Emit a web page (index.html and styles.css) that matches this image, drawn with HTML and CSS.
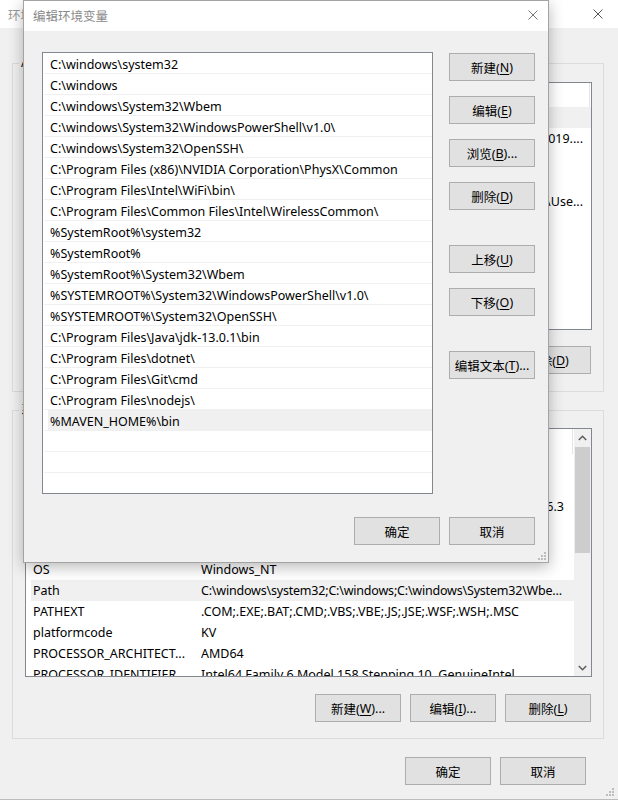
FILE: index.html
```html
<!DOCTYPE html>
<html lang="zh-CN">
<head>
<meta charset="utf-8">
<title>编辑环境变量</title>
<link rel="stylesheet" href="styles.css">
</head>
<body>
<div class="win">
  <div class="win-title">
    <span class="caption">环境变量</span>
    <svg class="x" width="10" height="10" viewBox="0 0 10 10"><path d="M0.5 0.5L9.5 9.5M9.5 0.5L0.5 9.5"/></svg>
  </div>
  <div class="win-body">
    <section class="group">
      <div class="legend">Administrator 的用户变量(<u>U</u>)</div>
      <div class="lv lv-user">
        <div class="lv-main">
          <div class="lv-head"><div class="hc c1">变量</div><div class="hc c2">值</div></div>
          <div class="lv-rows">
            <div class="row sel"><span class="k">ChocolateyLastPathUpdate</span><span class="v">132246912831094521</span></div>
            <div class="row"><span class="k">IntelliJ IDEA</span><span class="v end">D:\Program Files\JetBrains\IntelliJ IDEA 2019....</span></div>
            <div class="row"><span class="k">OneDrive</span><span class="v">C:\Users\Administrator\OneDrive</span></div>
            <div class="row"><span class="k">OneDriveConsumer</span><span class="v">C:\Users\Administrator\OneDrive</span></div>
            <div class="row"><span class="k">Path</span><span class="v end">C:\Program Files\nodejs;C:\Use...</span></div>
            <div class="row"><span class="k">TEMP</span><span class="v">%USERPROFILE%\AppData\Local\Temp</span></div>
            <div class="row"><span class="k">TMP</span><span class="v">%USERPROFILE%\AppData\Local\Temp</span></div>
          </div>
        </div>
      </div>
      <div class="btn-row">
        <button class="btn">新建(<u>N</u>)...</button>
        <button class="btn">编辑(<u>E</u>)...</button>
        <button class="btn">删除(<u>D</u>)</button>
      </div>
    </section>

    <section class="group group-sys">
      <div class="legend">系统变量(<u>S</u>)</div>
      <div class="lv lv-sys">
        <div class="lv-main">
          <div class="lv-head"><div class="hc c1">变量</div><div class="hc c2">值</div></div>
          <div class="lv-rows">
            <div class="row"><span class="k">ComSpec</span><span class="v">C:\windows\system32\cmd.exe</span></div>
            <div class="row"><span class="k">JAVA_HOME</span><span class="v">C:\Program Files\Java\jdk-13.0.1</span></div>
            <div class="row"><span class="k">MAVEN_HOME</span><span class="v end">D:\Program Files\apache-maven-3.6.3</span></div>
            <div class="row"><span class="k">NUMBER_OF_PROCESSORS</span><span class="v">12</span></div>
            <div class="row"><span class="k">NVM_HOME</span><span class="v">C:\Users\Administrator\AppData\Roaming\nvm</span></div>
            <div class="row"><span class="k">OS</span><span class="v">Windows_NT</span></div>
            <div class="row sel"><span class="k">Path</span><span class="v fit">C:\windows\system32;C:\windows;C:\windows\System32\Wbe...</span></div>
            <div class="row"><span class="k">PATHEXT</span><span class="v">.COM;.EXE;.BAT;.CMD;.VBS;.VBE;.JS;.JSE;.WSF;.WSH;.MSC</span></div>
            <div class="row"><span class="k">platformcode</span><span class="v">KV</span></div>
            <div class="row"><span class="k">PROCESSOR_ARCHITECT...</span><span class="v">AMD64</span></div>
            <div class="row"><span class="k">PROCESSOR_IDENTIFIER</span><span class="v">Intel64 Family 6 Model 158 Stepping 10, GenuineIntel</span></div>
            <div class="row"><span class="k">PROCESSOR_LEVEL</span><span class="v">6</span></div>
          </div>
        </div>
        <div class="sb">
          <div class="sb-btn"><svg width="9" height="6" viewBox="0 0 9 6"><path d="M0.8 5L4.5 1.3L8.2 5"/></svg></div>
          <div class="sb-thumb"></div>
          <div class="sb-track"></div>
          <div class="sb-btn"><svg width="9" height="6" viewBox="0 0 9 6"><path d="M0.8 1L4.5 4.7L8.2 1"/></svg></div>
        </div>
      </div>
      <div class="btn-row">
        <button class="btn">新建(<u>W</u>)...</button>
        <button class="btn">编辑(<u>I</u>)...</button>
        <button class="btn">删除(<u>L</u>)</button>
      </div>
    </section>

    <div class="win-foot">
      <button class="btn">确定</button>
      <button class="btn">取消</button>
    </div>
  </div>
  <svg class="grip win-grip" width="8" height="8" viewBox="0 0 8 8"><path d="M6 0h2v2h-2zM6 3h2v2h-2zM3 3h2v2h-2zM6 6h2v2h-2zM3 6h2v2h-2zM0 6h2v2h-2z"/></svg>
</div>

<div class="dlg">
  <div class="dlg-title">
    <span class="caption">编辑环境变量</span>
    <svg class="x" width="10" height="10" viewBox="0 0 10 10"><path d="M0.5 0.5L9.5 9.5M9.5 0.5L0.5 9.5"/></svg>
  </div>
  <div class="dlg-body">
    <ul class="path-list">
      <li>C:\windows\system32</li>
      <li>C:\windows</li>
      <li>C:\windows\System32\Wbem</li>
      <li>C:\windows\System32\WindowsPowerShell\v1.0\</li>
      <li>C:\windows\System32\OpenSSH\</li>
      <li>C:\Program Files (x86)\NVIDIA Corporation\PhysX\Common</li>
      <li>C:\Program Files\Intel\WiFi\bin\</li>
      <li>C:\Program Files\Common Files\Intel\WirelessCommon\</li>
      <li>%SystemRoot%\system32</li>
      <li>%SystemRoot%</li>
      <li>%SystemRoot%\System32\Wbem</li>
      <li>%SYSTEMROOT%\System32\WindowsPowerShell\v1.0\</li>
      <li>%SYSTEMROOT%\System32\OpenSSH\</li>
      <li>C:\Program Files\Java\jdk-13.0.1\bin</li>
      <li>C:\Program Files\dotnet\</li>
      <li>C:\Program Files\Git\cmd</li>
      <li>C:\Program Files\nodejs\</li>
      <li class="sel">%MAVEN_HOME%\bin</li>
      <li></li>
      <li></li>
      <li></li>
    </ul>
    <div class="side">
      <div class="side-group">
        <button class="btn">新建(<u>N</u>)</button>
        <button class="btn">编辑(<u>E</u>)</button>
        <button class="btn">浏览(<u>B</u>)...</button>
        <button class="btn">删除(<u>D</u>)</button>
      </div>
      <div class="side-group">
        <button class="btn">上移(<u>U</u>)</button>
        <button class="btn">下移(<u>O</u>)</button>
      </div>
      <div class="side-group">
        <button class="btn">编辑文本(<u>T</u>)...</button>
      </div>
    </div>
    <div class="dlg-foot">
      <button class="btn">确定</button>
      <button class="btn">取消</button>
    </div>
  </div>
  <svg class="grip dlg-grip" width="8" height="8" viewBox="0 0 8 8"><path d="M6 0h2v2h-2zM6 3h2v2h-2zM3 3h2v2h-2zM6 6h2v2h-2zM3 6h2v2h-2zM0 6h2v2h-2z"/></svg>
</div>
</body>
</html>
```

FILE: styles.css
```css
* { box-sizing: border-box; }

html, body { margin: 0; padding: 0; }

body {
  width: 618px;
  height: 804px;
  overflow: hidden;
  position: relative;
  background: #ffffff;
  color: #000;
  font: 12.5px "Noto Sans", "Noto Sans CJK SC", sans-serif;
}

u { text-decoration: underline; text-underline-offset: 2px; }

.x path { stroke: #555; stroke-width: 1; fill: none; }

/* background window */
.win {
  width: 618px;
  height: 800px;
  background: #f0f0f0;
  border-bottom: 1px solid #bdbdbd;
  position: relative;
}

.win-title {
  height: 28px;
  background: #fff;
  display: flex;
  align-items: center;
  justify-content: space-between;
  padding: 0 15px 0 8px;
  color: #999;
}

.win-body {
  padding: 35px 14px 0 12px;
}

.group {
  position: relative;
  border: 1px solid #dcdcdc;
  padding: 18px 11px 17px 12px;
}

.group-sys {
  margin-top: 18px;
  padding: 17px 11px 16px 12px;
}

.legend {
  position: absolute;
  top: -9px;
  left: 6px;
  padding: 0 2px;
  background: #f0f0f0;
  line-height: 16px;
  white-space: nowrap;
}

.lv {
  background: #fff;
  border: 1px solid #828790;
  display: flex;
  overflow: hidden;
}

.lv-user { height: 248px; }
.lv-sys { height: 249px; }

.lv-main {
  flex: 1;
  min-width: 0;
  display: flex;
  flex-direction: column;
  overflow: hidden;
}

.lv-head {
  flex: none;
  height: 24px;
  display: flex;
  padding-right: 1px;
  color: #000;
}

.lv-sys .lv-head { height: 25px; }

.hc {
  border-right: 1px solid #e5e5e5;
  padding-left: 7px;
  line-height: 24px;
}

.hc.c1 { width: 168px; }
.hc.c2 { flex: 1; }

.lv-rows { flex: 1; overflow: hidden; }

.row {
  height: 21px;
  line-height: 22px;
  display: flex;
  white-space: nowrap;
}

.row.sel { background: linear-gradient(to right, transparent 5px, #f0f0f0 5px); }

.row .k {
  flex: none;
  width: 175px;
  padding-left: 7px;
  overflow: hidden;
}

.row .v {
  flex: 1;
  min-width: 0;
  overflow: hidden;
}

.row .v.fit { letter-spacing: -0.2px; }

.lv-user .v.end { text-align: right; padding-right: 8px; }
.lv-sys .v.end { text-align: right; padding-right: 10px; }

.sb {
  flex: none;
  width: 17px;
  background: #f0f0f0;
  display: flex;
  flex-direction: column;
}

.sb-btn {
  height: 17px;
  flex: none;
  display: flex;
  align-items: center;
  justify-content: center;
}

.sb-btn path { stroke: #606060; stroke-width: 1.6; fill: none; }

.sb-thumb {
  height: 106px;
  margin: 1px 1px 0;
  background: #cdcdcd;
}

.sb-track { flex: 1; }

.btn-row {
  display: flex;
  justify-content: flex-end;
  gap: 9px;
  margin: 16px 1px 0 0;
}

.group-sys .btn-row { margin-top: 17px; }

.btn {
  width: 86px;
  height: 28px;
  padding: 0;
  margin: 0;
  background: #e1e1e1;
  border: 1px solid #adadad;
  color: #000;
  font: inherit;
  display: flex;
  align-items: center;
  justify-content: center;
  white-space: nowrap;
}

.win-foot {
  display: flex;
  justify-content: flex-end;
  gap: 9px;
  margin: 18px 18px 0 0;
}

.grip path { fill: #bdbdbd; }

.win-grip { position: absolute; right: 4px; bottom: 3px; }

/* foreground dialog */
.dlg {
  position: absolute;
  left: 23px;
  top: 0;
  width: 526px;
  height: 563px;
  background: #f0f0f0;
  border: 1px solid #a3a3a3;
  box-shadow: 0 4px 14px rgba(0, 0, 0, 0.28);
}

.dlg-title {
  height: 30px;
  background: #fff;
  display: flex;
  align-items: center;
  justify-content: space-between;
  padding: 0 10px 2px 9px;
  color: #8a8a8a;
}

.dlg-title .x path { stroke: #777; }

.dlg-body {
  display: grid;
  grid-template-columns: 391px 86px;
  column-gap: 16px;
  padding: 21px 13px 17px 18px;
}

.path-list {
  height: 442px;
  margin: 0;
  padding: 0;
  list-style: none;
  background: #fff;
  border: 1px solid #828790;
  overflow: hidden;
}

.path-list li {
  height: 21px;
  margin-left: 1px;
  padding-left: 6px;
  border-bottom: 1px solid #f0f0f0;
  line-height: 23px;
  white-space: nowrap;
}

.path-list li.sel { background: linear-gradient(to right, transparent 4px, #f0f0f0 4px); }

.side {
  display: flex;
  flex-direction: column;
  gap: 35px;
  padding-top: 1px;
}

.side-group {
  display: flex;
  flex-direction: column;
  gap: 15px;
}

.dlg-foot {
  grid-column: 1 / -1;
  display: flex;
  justify-content: flex-end;
  gap: 9px;
  margin-top: 23px;
}

.dlg-grip { position: absolute; right: 2px; bottom: 2px; }
```
